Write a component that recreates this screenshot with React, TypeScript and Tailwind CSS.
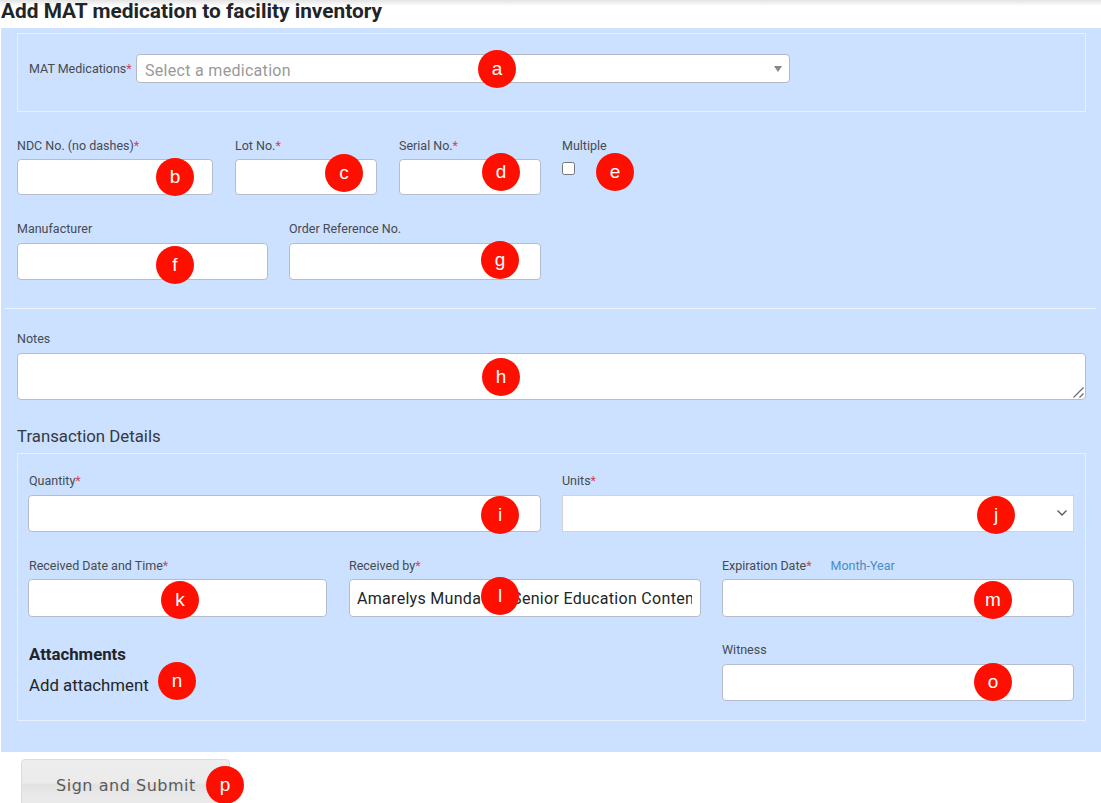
import React from "react";

const inputCls =
  "block w-full h-full bg-white border border-[#b5bccb] rounded-[4px] pl-[7px] pr-[8px] text-[16px] text-[#212529] outline-none tracking-[0.3px]";

function Req() {
  return <span className="text-[#d9405a]">*</span>;
}

function Label({
  text,
  req,
  inset,
  low,
}: {
  text: string;
  req?: boolean;
  inset?: boolean;
  low?: boolean;
}) {
  return (
    <div
      className={`h-[14px] text-[12.5px] leading-[14px] text-[#454b52] whitespace-nowrap ${inset ? "pl-px" : ""} ${low ? "mt-px mb-[6px]" : "mb-[7px]"}`}
    >
      {text}
      {req && <Req />}
    </div>
  );
}

function Field({
  text,
  req,
  w,
  h,
  value,
  inset,
  low,
}: {
  text: string;
  req?: boolean;
  w: string;
  h: string;
  value?: string;
  inset?: boolean;
  low?: boolean;
}) {
  return (
    <div className={w}>
      <Label text={text} req={req} inset={inset} low={low} />
      <div className={h}>
        <input className={inputCls} type="text" value={value ?? ""} readOnly />
      </div>
    </div>
  );
}

function Badge({ letter, pos }: { letter: string; pos: string }) {
  return (
    <div
      className={`absolute w-[38px] h-[38px] rounded-full bg-[#fe0f00] text-white text-[19px] leading-[38px] text-center font-['Liberation_Sans',sans-serif] ${pos}`}
    >
      {letter}
    </div>
  );
}

export default function App() {
  return (
    <div className="relative w-[1101px] h-[803px] overflow-hidden bg-white font-['Roboto',sans-serif]">
      <div className="h-[28px] bg-gradient-to-b from-[#e4e4e4] via-white via-[22%] to-white">
        <h1 className="pl-px pt-0 text-[20.85px] leading-[22px] font-bold text-[#212529] whitespace-nowrap">
          Add MAT medication to facility inventory
        </h1>
      </div>

      <div className="ml-px h-[724px] bg-[#cce0ff] pt-[5px]">
        <div className="ml-[16px] w-[1069px] h-[79px] border border-[#e6f0ff] pl-[11px] pt-[20px] flex items-start">
          <div className="w-[107px] pt-[8px] text-[12.5px] leading-[14px] text-[#454b52] whitespace-nowrap">
            MAT Medications
            <Req />
          </div>
          <div className="w-[654px] h-[29px] bg-white border border-[#b3b9c2] rounded-[4px] flex items-center justify-between pl-[8px] pr-[7px]">
            <span className="pt-[4px] text-[16px] tracking-[0.3px] text-[#999999]">Select a medication</span>
            <span className="w-0 h-0 border-x-[4px] border-x-transparent border-t-[6px] border-t-[#888888]" />
          </div>
        </div>

        <div className="ml-[16px] mt-[26px] flex">
          <Field text="NDC No. (no dashes)" req low w="w-[196px]" h="h-[36px]" />
          <Field text="Lot No." req low w="ml-[22px] w-[142px]" h="h-[36px]" />
          <Field text="Serial No." req low w="ml-[22px] w-[142px]" h="h-[36px]" />
          <div className="ml-[21px]">
            <Label text="Multiple" low />
            <input
              type="checkbox"
              readOnly
              className="block mt-[9px] w-[13px] h-[13px] appearance-none bg-white border border-[#767676] rounded-[2.5px]"
            />
          </div>
        </div>

        <div className="ml-[16px] mt-[27px] flex">
          <Field text="Manufacturer" w="w-[251px]" h="h-[37px]" />
          <Field text="Order Reference No." w="ml-[21px] w-[252px]" h="h-[37px]" />
        </div>

        <div className="ml-[4px] mt-[28px] w-[1091px] h-px bg-[#eef5ff]" />

        <div className="ml-[16px] mt-[23px] w-[1069px]">
          <Label text="Notes" />
          <div className="relative h-[47px]">
            <textarea
              readOnly
              value=""
              className="block w-full h-full resize-none bg-white border border-[#b5bccb] rounded-[4px] outline-none"
            />
            <svg
              className="absolute right-[2px] bottom-[2px] w-[11px] h-[11px]"
              viewBox="0 0 11 11"
              fill="none"
              stroke="#6b6b6b"
              strokeWidth="1.2"
            >
              <path d="M0.5 10.5 10.5 0.5M6.5 10.5 10.5 6.5" />
            </svg>
          </div>
        </div>

        <div className="ml-[16px] mt-[26px] h-[20px] text-[16.8px] leading-[20px] text-[#343a40]">
          Transaction Details
        </div>

        <div className="ml-[16px] mt-[7px] w-[1069px] h-[268px] border border-[#e6f0ff] pl-[10px] pt-[20px]">
          <div className="flex">
            <Field text="Quantity" req inset w="w-[513px]" h="h-[37px]" />
            <div className="ml-[21px] w-[512px]">
              <Label text="Units" req />
              <div className="relative h-[37px]">
                <select className="block w-full h-full appearance-none bg-white border border-[#ced4da] outline-none" />
                <svg
                  className="absolute right-[6px] top-[14px] w-[12px] h-[8px]"
                  viewBox="0 0 12 8"
                  fill="none"
                  stroke="#555555"
                  strokeWidth="1.3"
                >
                  <path d="M1.5 1.5 6 6l4.5-4.5" />
                </svg>
              </div>
            </div>
          </div>

          <div className="mt-[26px] flex">
            <Field text="Received Date and Time" req inset low w="w-[299px]" h="h-[38px]" />
            <Field
              text="Received by"
              req
              low
              w="ml-[22px] w-[352px]"
              h="h-[38px]"
              value="Amarelys Mundaca - Senior Education Content Manager"
            />
            <div className="ml-[21px] w-[352px]">
              <div className="h-[14px] mt-px mb-[6px] flex text-[12.5px] leading-[14px] text-[#454b52] whitespace-nowrap">
                <span>
                  Expiration Date
                  <Req />
                </span>
                <span className="ml-[19px] text-[#4a8cc4]">Month-Year</span>
              </div>
              <div className="h-[38px]">
                <input className={inputCls} type="text" value="" readOnly />
              </div>
            </div>
          </div>

          <div className="mt-[26px] flex">
            <div className="w-[694px] pl-px">
              <div className="h-[22px] text-[16.8px] leading-[22px] font-bold text-[#212529]">Attachments</div>
              <div className="mt-[9px] text-[16.8px] leading-[22px] text-[#212529]">Add attachment</div>
            </div>
            <Field text="Witness" w="w-[352px]" h="h-[37px]" />
          </div>
        </div>
      </div>

      <button className="block ml-[21px] mt-[7px] w-[209px] h-[52px] pt-[2px] rounded-[4px] border border-[#dcdcdc] bg-[linear-gradient(180deg,#eeeeee_0%,#ebebeb_45%,#e2e2e2_50%,#e9e9e9_70%,#ececec_100%)] text-left pl-[34px] font-['DejaVu_Sans',sans-serif] text-[16px] tracking-[0.53px] text-[#5a5a5a]">
        Sign and Submit
      </button>

      <Badge letter="a" pos="left-[478px] top-[50px]" />
      <Badge letter="b" pos="left-[156px] top-[158px]" />
      <Badge letter="c" pos="left-[325px] top-[154px]" />
      <Badge letter="d" pos="left-[482px] top-[153px]" />
      <Badge letter="e" pos="left-[596px] top-[153px]" />
      <Badge letter="f" pos="left-[156px] top-[246px]" />
      <Badge letter="g" pos="left-[481px] top-[241px]" />
      <Badge letter="h" pos="left-[482px] top-[358px]" />
      <Badge letter="i" pos="left-[481px] top-[496px]" />
      <Badge letter="j" pos="left-[977px] top-[496px]" />
      <Badge letter="k" pos="left-[161px] top-[581px]" />
      <Badge letter="l" pos="left-[481px] top-[577px]" />
      <Badge letter="m" pos="left-[974px] top-[581px]" />
      <Badge letter="n" pos="left-[158px] top-[662px]" />
      <Badge letter="o" pos="left-[974px] top-[663px]" />
      <Badge letter="p" pos="left-[206px] top-[766px]" />
    </div>
  );
}
